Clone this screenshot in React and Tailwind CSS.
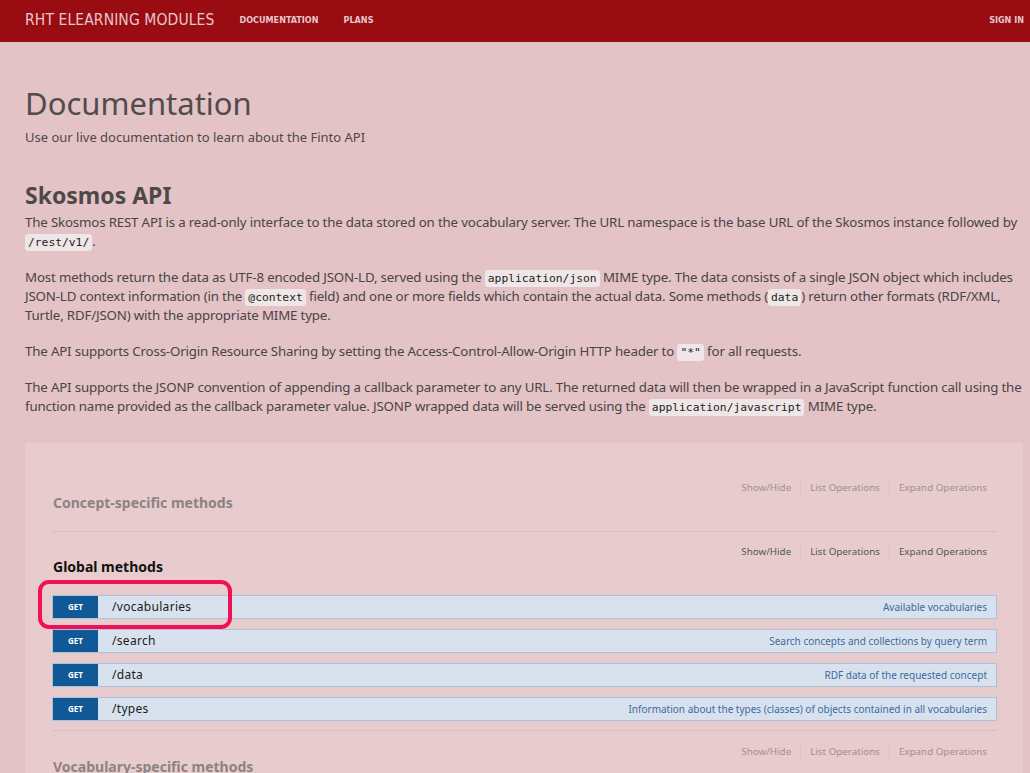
import React from 'react';

const Code = ({ children }) => (
    <code className="font-['DejaVu_Sans_Mono',monospace] text-[11.3px] leading-[14px] tracking-normal bg-[#efe6e7] rounded-[3px] px-[3px] py-[2px] text-[#222]">
        {children}
    </code>
);

const OpLinks = ({ muted }) => (
    <div className={`flex items-center h-[14px] text-[9.8px] leading-[14px] ${muted ? 'text-[#9a9090]' : 'text-[#555]'}`}>
        <span>Show/Hide</span>
        <span className="mx-[9px] h-[14px] w-px bg-[#d6c4c5]" />
        <span>List Operations</span>
        <span className="mx-[9px] h-[14px] w-px bg-[#d6c4c5]" />
        <span>Expand Operations</span>
    </div>
);

const endpoints = [
    { path: '/vocabularies', desc: 'Available vocabularies' },
    { path: '/search', desc: 'Search concepts and collections by query term' },
    { path: '/data', desc: 'RDF data of the requested concept' },
    { path: '/types', desc: 'Information about the types (classes) of objects contained in all vocabularies' },
];

export default function App() {
    return (
        <div className="w-[1030px] h-[773px] overflow-hidden bg-[#e3c3c5] font-['Noto_Sans',sans-serif] text-[#4e4849]">
            {/* navbar */}
            <div className="h-[42px] bg-[#990d12] flex items-center px-[25px] text-[#e7c6cc] font-['DejaVu_Sans_Condensed','DejaVu_Sans',sans-serif]">
                <span className="text-[15.5px] tracking-[0.1px]">RHT ELEARNING MODULES</span>
                <span className="ml-[25px] text-[9px] font-bold">DOCUMENTATION</span>
                <span className="ml-[25px] text-[9px] font-bold">PLANS</span>
                <span className="ml-auto mr-[-19px] text-[9px] font-bold">SIGN IN</span>
            </div>

            <div className="pl-[25px] pr-[8px]">
                <h1 className="mt-[41px] text-[31px] leading-[40px] text-[#524b4c]">Documentation</h1>
                <p className="mt-[5px] text-[13px] leading-[18px]">Use our live documentation to learn about the Finto API</p>

                <h2 className="mt-[33px] text-[23px] leading-[32px] font-bold text-[#4e4849]">Skosmos API</h2>
                <div className="text-[13.3px] leading-[19px] tracking-[-0.17px] text-[#4a4445] mt-[2px]">
                    <p>
                        The Skosmos REST API is a read-only interface to the data stored on the vocabulary server. The URL namespace is the base URL of the Skosmos instance followed by <Code>/rest/v1/</Code>.
                    </p>
                    <p className="mt-[17px]">
                        Most methods return the data as UTF-8 encoded JSON-LD, served using the <Code>application/json</Code> MIME type. The data consists of a single JSON object which includes JSON-LD context information (in the <Code>@context</Code> field) and one or more fields which contain the actual data. Some methods (<Code>data</Code>) return other formats (RDF/XML, Turtle, RDF/JSON) with the appropriate MIME type.
                    </p>
                    <p className="mt-[17px]">
                        The API supports Cross-Origin Resource Sharing by setting the Access-Control-Allow-Origin HTTP header to <Code>"*"</Code> for all requests.
                    </p>
                    <p className="mt-[17px]">
                        The API supports the JSONP convention of appending a callback parameter to any URL. The returned data will then be wrapped in a JavaScript function call using the function name provided as the callback parameter value. JSONP wrapped data will be served using the <Code>application/javascript</Code> MIME type.
                    </p>
                </div>

                {/* swagger box */}
                <div className="mt-[27px] w-[998px] bg-[#e8cccd] pl-[27px] pr-[26px] pt-[38px] pb-[40px]">
                    {/* concept-specific */}
                    <div className="border-b border-[#d5c0c1] pb-[18px]">
                        <div className="flex justify-end pr-[10px]"><OpLinks muted /></div>
                        <h3 className="mt-[-2px] ml-px text-[14px] leading-[20px] font-bold text-[#8c8283]">Concept-specific methods</h3>
                    </div>

                    {/* global */}
                    <div className="border-b border-[#d5c0c1] pb-[9px] pt-[13px]">
                        <div className="flex justify-end pr-[10px]"><OpLinks /></div>
                        <h3 className="mt-[-2px] ml-px text-[14px] leading-[20px] font-bold text-[#111]">Global methods</h3>
                        <div className="mt-[18px] flex flex-col gap-[10px]">
                            {endpoints.map((ep, i) => (
                                <div key={ep.path} className="relative">
                                    <div className="h-[24px] flex items-center bg-[#d8e2ee] border border-[#a9c1da]">
                                        <span className="w-[45px] h-full bg-[#105896] text-white text-[8px] font-bold flex items-center justify-center">GET</span>
                                        <span className="ml-[14px] text-[12px] text-[#1a1a1a] tracking-[0.3px]">{ep.path}</span>
                                        <span className="ml-auto mr-[9px] text-[10px] text-[#3d6b9e]">{ep.desc}</span>
                                    </div>
                                    {i === 0 && (
                                        <div className="absolute left-[-14px] top-[-15px] w-[194px] h-[49px] border-[4px] border-[#f10f55] rounded-[11px]" />
                                    )}
                                </div>
                            ))}
                        </div>
                    </div>

                    {/* vocabulary-specific */}
                    <div className="pt-[14px]">
                        <div className="flex justify-end pr-[10px]"><OpLinks muted /></div>
                        <h3 className="mt-[-2px] ml-px text-[14px] leading-[20px] font-bold text-[#8c8283]">Vocabulary-specific methods</h3>
                    </div>
                </div>
            </div>
        </div>
    );
}
